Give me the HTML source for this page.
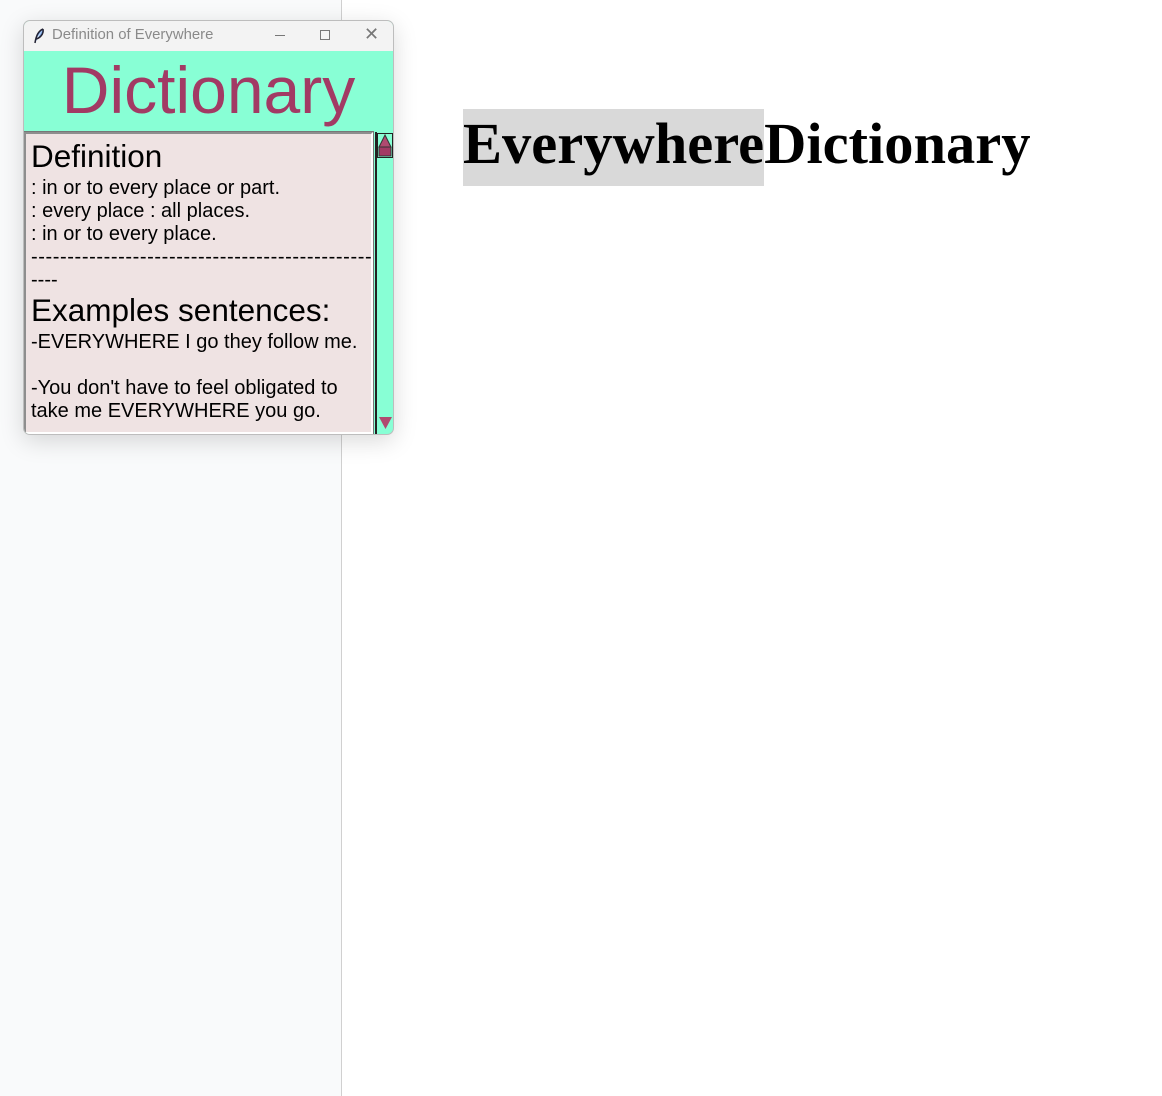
<!DOCTYPE html>
<html><head><style>
*{margin:0;padding:0;box-sizing:border-box}
body{width:1162px;height:1096px;position:relative;background:#fff;overflow:hidden;font-family:"Liberation Sans",sans-serif}
.left{position:absolute;left:0;top:0;width:342px;height:1096px;background:#f9fafb;border-right:1px solid #d0d0d0}
.win{position:absolute;left:23px;top:20px;width:371px;height:415px;border:1px solid #bdbdbd;border-radius:7px;overflow:hidden;background:#88ffd5;box-shadow:0 6px 24px rgba(0,0,0,.15)}
.tb{height:30px;background:#f3f3f3;position:relative;font-size:14.9px;color:#8a8a8a}
.tb .t{position:absolute;left:28px;top:6px}
.hdr{position:absolute;left:0;top:30px;width:369px;height:81px;text-align:center;color:#a23a64;font-size:66px;line-height:78px}
.box{position:absolute;left:0;top:111px;width:349px;height:302px;background:#efe3e3;border:2px solid #8e8e8e;border-right-color:#fff;border-bottom-color:#fff;outline:1px solid #777;padding:4px 0 0 5px;font-size:20px;line-height:23px;color:#000;overflow:hidden}
.big{font-size:31.5px;line-height:36px}
.sb{position:absolute;left:351px;top:111px;width:18px;height:302px;border-left:2px solid #222}
</style></head><body>
<div class="left"></div>
<div class="win">
 <div class="tb">
  <svg style="position:absolute;left:9px;top:7px" width="12" height="16" viewBox="0 0 12 16"><path d="M10 1 C5 3 3 8 2 15 M10 1 C11 6 7 10 3 11" stroke="#223" stroke-width="1.5" fill="#7aa8e8"/></svg>
  <span class="t">Definition of Everywhere</span>
  <div style="position:absolute;left:251px;top:14px;width:10px;height:1px;background:#777"></div>
  <div style="position:absolute;left:296px;top:9px;width:10px;height:10px;border:1px solid #777"></div>
  <span style="position:absolute;left:340px;top:3px;font-size:18px;color:#777">✕</span>
 </div>
 <div class="hdr">Dictionary</div>
 <div class="box">
  <div class="big" style="margin-bottom:3px">Definition</div>
  <div>: in or to every place or part.</div>
  <div>: every place : all places.</div>
  <div>: in or to every place.</div>
  <div style="white-space:nowrap;letter-spacing:0.6px">-----------------------------------------------</div>
  <div>----</div>
  <div class="big" style="margin-bottom:3px">Examples sentences:</div>
  <div>-EVERYWHERE I go they follow me.</div>
  <div>&nbsp;</div>
  <div>-You don't have to feel obligated to</div>
  <div>take me EVERYWHERE you go.</div>
 </div>
 <div class="sb">
  <svg style="position:absolute;left:0px;top:1px" width="16" height="25"><rect x="0.5" y="0.5" width="15" height="24" fill="none" stroke="#222"/><polygon points="8,2 14,14 2,14" fill="#b04a70" stroke="#333" stroke-width="1"/><rect x="2" y="14" width="12" height="9" fill="#a23a64" stroke="#333"/></svg>
  <svg style="position:absolute;left:1px;top:284px" width="15" height="14"><polygon points="1,1 14,1 7.5,13" fill="#b04a70"/></svg>
 </div>
</div>
<div style="position:absolute;left:463px;top:109px;width:301px;height:77px;background:#d9d9d9"></div>
<div style="position:absolute;left:463px;top:104px;font-family:'Liberation Serif',serif;font-weight:bold;font-size:58.5px;line-height:80px;white-space:nowrap">EverywhereDictionary</div>
</body></html>
